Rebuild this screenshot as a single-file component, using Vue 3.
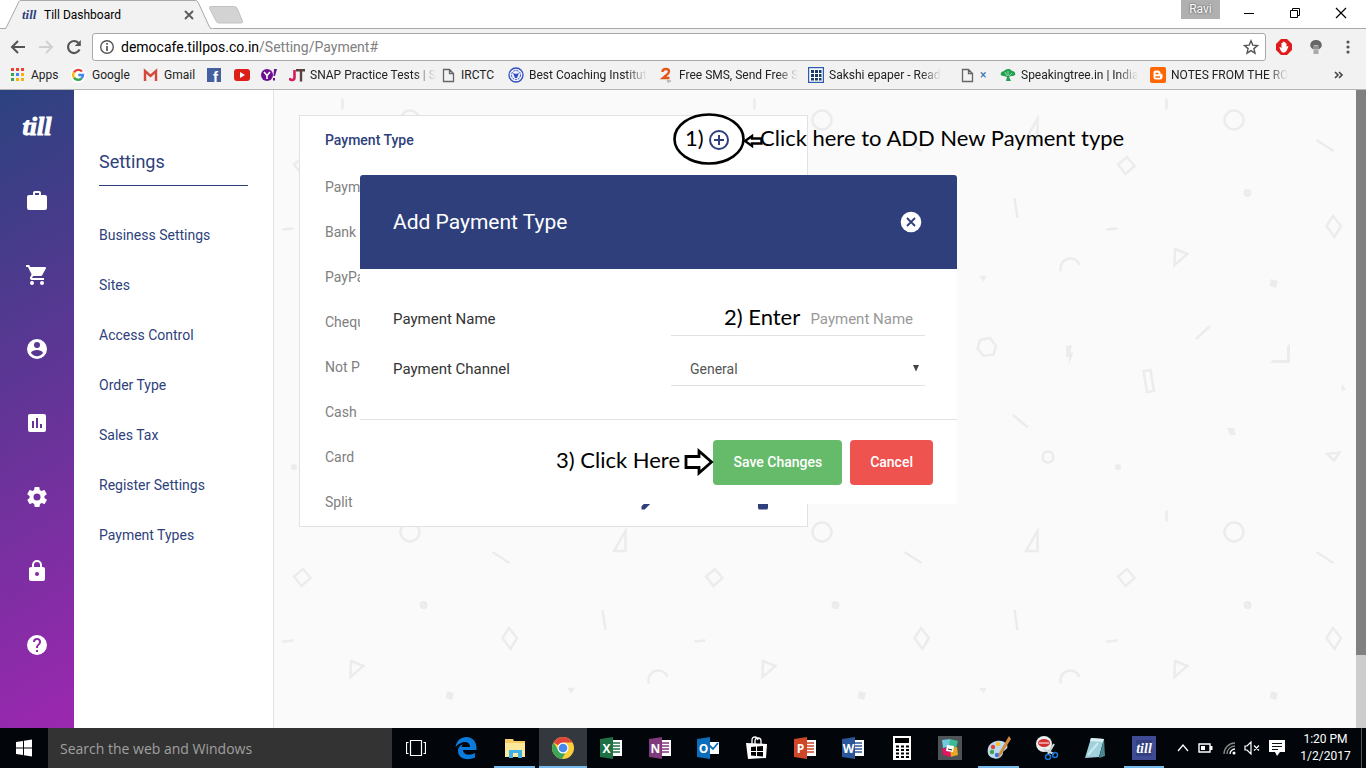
<template>
  <div class="screen">
    <header class="browser">
      <div class="tab-strip">
        <div class="tab">
          <svg class="tab-shape" viewBox="0 0 208 29">
            <path d="M0 28.5H1L14 1.5Q14.5 .5 16 .5H190Q192 .5 193 2L205 28.500H208V29H0z" fill="#f2f2f2" />
            <path d="M0 28.500Q1 28.500 2 26L14 1.500Q14.500 .5 16 .5H190Q192 .5 193 2L204 26Q205 28.500 207 28.500" fill="none" stroke="#a9a9a9" />
          </svg>
          <span class="tab-logo">till</span>
          <span class="tab-title">Till Dashboard</span>
          <button class="plain tab-close" aria-label="Close tab">
            <svg width="10" height="10" viewBox="0 0 10 10"><path d="M1 1l8 8M9 1L1 9" stroke="#5a5a5a" stroke-width="1.800" /></svg>
          </button>
        </div>
        <button class="plain new-tab" aria-label="New tab">
          <svg width="36" height="18" viewBox="0 0 36 18">
            <path d="M3 .5H26Q28 .5 29 2L34.500 15Q35 17 33 17H11Q9 17 8 15L1.500 2Q1 .5 3 .5z" fill="#d3d3d3" stroke="#c2c2c2" />
          </svg>
        </button>
        <span class="profile">Ravi</span>
        <div class="window-buttons">
          <button class="plain" aria-label="Minimize"><svg width="12" height="12" viewBox="0 0 12 12"><path d="M1 6.500h10" stroke="#000" /></svg></button>
          <button class="plain" aria-label="Restore"><svg width="12" height="12" viewBox="0 0 12 12"><path d="M1.500 3.500h7v7h-7zM3.500 3.500v-2h7v7h-2" fill="none" stroke="#000" /></svg></button>
          <button class="plain" aria-label="Close"><svg width="12" height="12" viewBox="0 0 12 12"><path d="M1 1l10 10M11 1L1 11" stroke="#000" stroke-width="1.2" /></svg></button>
        </div>
      </div>

      <div class="toolbar">
        <button class="plain nav-button" aria-label="Back">
          <svg width="16" height="16" viewBox="0 0 16 16"><path d="M15 8H2.500M8 2L2 8l6 6" fill="none" stroke="#555" stroke-width="2" /></svg>
        </button>
        <button class="plain nav-button" aria-label="Forward">
          <svg width="16" height="16" viewBox="0 0 16 16"><path d="M1 8h12.500M8 2l6 6-6 6" fill="none" stroke="#d0d0d0" stroke-width="2" /></svg>
        </button>
        <button class="plain nav-button" aria-label="Reload">
          <svg width="16" height="16" viewBox="0 0 16 16"><path d="M13.500 10.500A6 6 0 1 1 12.500 4" fill="none" stroke="#555" stroke-width="2.200" /><path d="M14.800 1v6H8.800z" fill="#555" /></svg>
        </button>
        <div class="address">
          <svg width="16" height="16" viewBox="0 0 16 16"><circle cx="8" cy="8" r="6.300" fill="none" stroke="#555" stroke-width="1.400" /><path d="M8 7v5M8 4v1.800" stroke="#555" stroke-width="1.700" /></svg>
          <span class="url">democafe.tillpos.co.in<span class="path">/Setting/Payment#</span></span>
          <button class="plain" aria-label="Bookmark this page">
            <svg width="16" height="16" viewBox="0 0 16 16"><path d="M8 1.800l1.800 4.300 4.700.4-3.600 3.100 1.100 4.600L8 11.700l-4 2.500 1.100-4.600-3.600-3.100 4.700-.4z" fill="none" stroke="#555" stroke-width="1.400" /></svg>
          </button>
        </div>
        <div class="extensions">
          <svg width="16" height="16" viewBox="0 0 16 16"><path d="M5 0h6l5 5v6l-5 5H5l-5-5V5z" fill="#e01b1b" /><path d="M5 12L3.300 8.500l1-.6 1.200 1.300V4h1.200v3.500V2.800H8v4.500V3h1.300v4.500V4.300h1.200V8l1.100-1 .9.500L10.500 12l-2 1.500h-2z" fill="#fff" /></svg>
          <svg width="16" height="16" viewBox="0 0 16 16"><path d="M8 1a5.500 5 0 0 0-3 9.300h6A5.500 5 0 0 0 8 1z" fill="#666" /><path d="M6 10V6.500h4V10M8 6.500V10" fill="none" stroke="#bbb" /><path d="M5.500 10.500h5V15h-5z" fill="#aaa" /></svg>
          <svg width="16" height="16" viewBox="0 0 16 16" fill="#555"><circle cx="8" cy="3" r="1.600" /><circle cx="8" cy="8" r="1.600" /><circle cx="8" cy="13" r="1.600" /></svg>
        </div>
      </div>

      <nav class="bookmarks">
        <a v-for="(item, i) in bookmarks" :key="i" href="#" class="bookmark" :style="{ width: item.width + 'px' }">
          <svg width="16" height="16" viewBox="0 0 16 16" v-html="item.icon"></svg>
          <span v-if="item.label" :class="{ faded: item.faded, tiny: item.label === '×' }">{{ item.label }}</span>
        </a>
        <button class="plain more" aria-label="More bookmarks">
          <svg width="10" height="8" viewBox="0 0 10 8"><path d="M1 1l3 3-3 3M5 1l3 3-3 3" fill="none" stroke="#444" stroke-width="1.600" /></svg>
        </button>
      </nav>
    </header>

    <div class="page">
      <aside class="rail">
        <a href="#" class="logo">till</a>
        <a v-for="item in rail" :key="item.name" href="#" class="rail-link" :aria-label="item.name">
          <svg width="24" height="24" viewBox="0 0 24 24"><path :d="item.path" fill="#fff" fill-rule="evenodd" /></svg>
        </a>
      </aside>

      <nav class="settings">
        <h2>Settings</h2>
        <a v-for="link in links" :key="link" href="#">{{ link }}</a>
      </nav>

      <main class="content">
        <svg class="pattern">
          <defs>
            <pattern id="shapes" x="-142" y="0" width="412" height="412" patternUnits="userSpaceOnUse">
              <g fill="none" stroke="#ececec" stroke-width="2.500">
                <path d="M210.500 8.500v11M360.500 50l17 11M58.500 108l3 20M150.500 139.500l11-1M240 249l14-13M57 325l15 12.500" />
                <circle cx="278" cy="30" r="9.500" />
                <circle cx="92" cy="367" r="5.500" />
                <path d="M81.500 29v20H70zM171 67l7.500 9-9 8-7.500-9.500zM377 126l8 10-6.500 11-8-11zM219 159l12.500 5-13 11z" />
                <path d="M24 250l10-2 6 8-2.500 8.500-10 1.500-6-7.500zM187.500 281l7-1 3.500 21-7 1zM371 364l12.500-1.500-5.500 8z" />
                <path d="M105 181.500A9.500 9.500 0 0 1 123.500 175" />
              </g>
              <g fill="#ececec">
                <circle cx="291.500" cy="103" r="4" />
                <circle cx="162" cy="377" r="3" />
                <path d="M23 186l8-.5-3.500 6zM315 189l7 2-2 7-6.500-2zM110 256l6-1-1.500 7.500h3L112.500 276l.5-9h-3zM314 273l3-3h14v-13l3-4v20zM386 294l4 5.500-4.500 1.500zM271 338h7l2 7h-6z" />
              </g>
            </pattern>
          </defs>
          <rect width="100%" height="100%" fill="url(#shapes)" />
        </svg>

        <section class="card">
          <div class="card-head">
            <h3>Payment Type</h3>
            <button class="plain add" aria-label="Add payment type">
              <svg width="20" height="20" viewBox="0 0 20 20"><circle cx="10" cy="10" r="9" fill="none" stroke="#2e3f7c" stroke-width="2" /><path d="M10 5v10M5 10h10" stroke="#2e3f7c" stroke-width="2" /></svg>
            </button>
          </div>
          <table>
            <tbody>
              <tr v-for="type in types" :key="type">
                <td>{{ type }}</td>
                <td class="edit">
                  <svg width="20" height="20" viewBox="0 0 24 24"><path d="M20.700 7c.4-.4.4-1 0-1.400l-2.300-2.300c-.4-.4-1-.4-1.400 0l-1.800 1.800 3.700 3.700M3 17.200V21h3.800L17.800 9.900l-3.700-3.700z" fill="#2e3f7c" /></svg>
                </td>
                <td class="remove">
                  <svg width="20" height="20" viewBox="0 0 24 24"><path d="M19 4h-3.500l-1-1h-5l-1 1H5v2h14M6 19a2 2 0 0 0 2 2h8a2 2 0 0 0 2-2V7H6z" fill="#2e3f7c" /></svg>
                </td>
              </tr>
            </tbody>
          </table>
        </section>

        <form class="modal" @submit.prevent>
          <div class="modal-head">
            <h2>Add Payment Type</h2>
            <button type="button" class="plain" aria-label="Close dialog">
              <svg width="22" height="22" viewBox="0 0 22 22"><circle cx="11" cy="11" r="10.300" fill="#fff" /><path d="M7 7l8 8M15 7l-8 8" stroke="#2e3f7c" stroke-width="1.800" /></svg>
            </button>
          </div>
          <div class="modal-body">
            <div class="field">
              <label for="payment-name">Payment Name</label>
              <input id="payment-name" v-model="name" type="text" placeholder="Payment Name" />
            </div>
            <div class="field">
              <label for="payment-channel">Payment Channel</label>
              <select id="payment-channel" v-model="channel">
                <option>General</option>
              </select>
              <svg class="caret" width="6" height="7" viewBox="0 0 6 7"><path d="M0 0h6L3 6.500z" fill="#444" /></svg>
            </div>
          </div>
          <div class="modal-foot">
            <button type="submit" class="save">Save Changes</button>
            <button type="button" class="cancel">Cancel</button>
          </div>
        </form>

        <svg class="mark ring" width="92" height="52" viewBox="0 0 92 52">
          <ellipse cx="36" cy="26" rx="34.500" ry="24.500" fill="none" stroke="#000" stroke-width="2.600" />
          <path d="M72 28l7-5v2.500h9.500v5H79V33z" fill="#fff" stroke="#000" stroke-width="2.400" />
        </svg>
        <span class="mark note-one">1)</span>
        <span class="mark note-add">Click here to ADD New Payment type</span>
        <span class="mark note-enter">2) Enter</span>
        <span class="mark note-save">3) Click Here</span>
        <svg class="mark arrow" width="30" height="28" viewBox="0 0 30 28">
          <path d="M2 8.500h13V3l12.500 11L15 25v-5.500H2z" fill="#fff" stroke="#000" stroke-width="2.800" />
        </svg>
      </main>

      <div class="scrollbar"><div class="thumb"></div></div>
    </div>

    <footer class="taskbar">
      <button class="plain start" aria-label="Start">
        <svg width="16" height="18" viewBox="0 0 16 18"><path d="M0 3l7-1v6.500H0zM8 1.800L16 .5v8H8zM0 9.500h7V16l-7-1zM8 9.500h8v8L8 16.200z" fill="#fff" /></svg>
      </button>
      <input class="search" type="text" placeholder="Search the web and Windows" aria-label="Search" />
      <button class="plain task-view" aria-label="Task view">
        <svg width="20" height="18" viewBox="0 0 20 18"><path d="M4.500 1.500h11v15h-11zM2.500 3.500h-2v11h2M17.500 3.500h2v11h-2" fill="none" stroke="#fff" stroke-width="1.200" /></svg>
      </button>
      <div class="apps">
        <button v-for="app in apps" :key="app.name" class="plain app" :class="{ open: app.open, active: app.active }" :aria-label="app.name">
          <svg width="24" height="24" viewBox="0 0 24 24" v-html="app.icon"></svg>
        </button>
      </div>
      <div class="tray">
        <svg width="12" height="12" viewBox="0 0 12 12"><path d="M1 9l5-6 5 6" fill="none" stroke="#fff" stroke-width="1.300" /></svg>
        <svg width="15" height="12" viewBox="0 0 15 12"><path d="M1 2h11v8H1z" fill="none" stroke="#fff" stroke-width="1.400" /><path d="M12 4h2.500v4H12zM3 4h4v4H3z" fill="#fff" /></svg>
        <svg width="14" height="14" viewBox="0 0 14 14"><path d="M2 13A11 11 0 0 1 13 2M5 13a8 8 0 0 1 8-8" fill="none" stroke="#888" stroke-width="1.300" /><path d="M8 13a5 5 0 0 1 5-5" fill="none" stroke="#fff" stroke-width="1.300" /><circle cx="12" cy="12" r="1.500" fill="#fff" /></svg>
        <svg width="16" height="14" viewBox="0 0 16 14"><path d="M1 5h2l4-4v12L3 9H1zM10 4.500l5 5M15 4.500l-5 5" fill="none" stroke="#fff" stroke-width="1.200" /></svg>
        <svg width="17" height="18" viewBox="0 0 17 18"><path d="M0 1h16v12h-5l-3 4-2-4H0z" fill="#fff" /><path d="M3 4.500h10M3 7.500h10M3 10.500h6" stroke="#111" /></svg>
      </div>
      <div class="clock"><span>1:20 PM</span><span>1/2/2017</span></div>
      <div class="show-desktop"></div>
    </footer>
  </div>
</template>

<script setup>
import { ref } from 'vue';

const name = ref('');
const channel = ref('General');

const links = ['Business Settings', 'Sites', 'Access Control', 'Order Type', 'Sales Tax', 'Register Settings', 'Payment Types'];

const types = ['Payment', 'Bank', 'PayPal', 'Cheque', 'Not Paid', 'Cash', 'Card', 'Split'];

const rail = [
  { name: 'Business', path: 'M10 2h4a2 2 0 0 1 2 2v2h4a2 2 0 0 1 2 2v11a2 2 0 0 1-2 2H4a2 2 0 0 1-2-2V8c0-1.100.9-2 2-2h4V4c0-1.100.9-2 2-2m4 4V4h-4v2z' },
  { name: 'Orders', path: 'M17 18a2 2 0 1 1 0 4 2 2 0 0 1 0-4M1 2h3.300l.9 2H20a1 1 0 0 1 .9 1.500l-3.600 6.500c-.3.600-1 1-1.700 1H8.100l-.9 1.600v.2c0 .1.100.2.200.2H19v2H7a2 2 0 0 1-1.800-3l1.400-2.400L3 4H1zM7 18a2 2 0 1 1 0 4 2 2 0 0 1 0-4' },
  { name: 'Customers', path: 'M12 2a10 10 0 1 0 0 20 10 10 0 0 0 0-20m0 3a3 3 0 1 1 0 6 3 3 0 0 1 0-6m0 14.200c-2.500 0-4.700-1.300-6-3.200 0-2 4-3.100 6-3.100s6 1.100 6 3.100c-1.300 1.900-3.500 3.200-6 3.200' },
  { name: 'Reports', path: 'M5 3h14a2 2 0 0 1 2 2v14a2 2 0 0 1-2 2H5a2 2 0 0 1-2-2V5c0-1.100.9-2 2-2m2 7v7h2v-7zm4-3v10h2V7zm4 6v4h2v-4z' },
  { name: 'Settings', path: 'M12 15.500a3.500 3.500 0 1 1 0-7 3.500 3.500 0 0 1 0 7m7.400-2.500a8 8 0 0 0 0-2l2.100-1.600c.2-.2.300-.4.100-.7l-2-3.400c-.1-.2-.4-.3-.6-.2l-2.500 1a7 7 0 0 0-1.700-1l-.4-2.600A.5.5 0 0 0 14 2h-4a.5.5 0 0 0-.5.400l-.4 2.700a7 7 0 0 0-1.700 1L5 5.100c-.2-.1-.5 0-.6.200l-2 3.400c-.1.300-.1.500.1.700L4.600 11a8 8 0 0 0 0 2l-2.100 1.700c-.2.100-.3.400-.1.600l2 3.500c.1.200.4.300.6.200l2.500-1c.5.400 1.100.7 1.700 1l.4 2.600c0 .2.200.4.500.4h4c.2 0 .5-.2.500-.4l.4-2.700a7 7 0 0 0 1.700-1l2.500 1c.2.100.5 0 .6-.2l2-3.400c.1-.2.100-.5-.1-.7z' },
  { name: 'Security', path: 'M12 17a2 2 0 1 0 0-4 2 2 0 0 0 0 4m6-9a2 2 0 0 1 2 2v10a2 2 0 0 1-2 2H6a2 2 0 0 1-2-2V10c0-1.100.9-2 2-2h1V6a5 5 0 0 1 10 0v2zm-6-5a3 3 0 0 0-3 3v2h6V6a3 3 0 0 0-3-3' },
  { name: 'Help', path: 'M12 2a10 10 0 1 0 0 20 10 10 0 0 0 0-20m-1 17v-2h2v2zm4.100-7.700-.9.900c-.8.700-1.200 1.300-1.200 2.800h-2v-.5c0-1.100.5-2.100 1.200-2.800l1.200-1.300A2 2 0 1 0 10 9H8a4 4 0 1 1 8 0c0 .9-.4 1.700-.9 2.300' }
];

const pageIcon = '<path d="M3.500 2.500h6l4 4v8h-10zM9.500 2.500v4h4" fill="none" stroke="#666" stroke-width="1.300"/>';

const bookmarks = [
  { label: 'Apps', width: 61, icon: '<g fill="#e94235"><path d="M1 1h3v3H1zM6 1h3v3H6zM11 1h3v3h-3z"/></g><path d="M1 6h3v3H1zM1 11h3v3H1z" fill="#34a853"/><path d="M6 6h3v3H6z" fill="#4285f4"/><path d="M6 11h3v3H6zM11 6h3v3h-3zM11 11h3v3h-3z" fill="#fbaf08"/>' },
  { label: 'Google', width: 72, icon: '<circle cx="7" cy="8" r="8" fill="#fff"/><g fill="none" stroke-width="2.400"><path d="M11 4.500A5 5 0 0 0 3 5.300" stroke="#ea4335"/><path d="M3 5.300a5 5 0 0 0 0 5.400" stroke="#fbbc05"/><path d="M3 10.700a5 5 0 0 0 7.500.8" stroke="#34a853"/><path d="M10.500 11.500A5 5 0 0 0 12 8H7.300" stroke="#4285f4"/></g>' },
  { label: 'Gmail', width: 64, icon: '<path d="M1 3h13v11H1z" fill="#eee"/><path d="M2 14V4l5.500 5L13 4v10" fill="none" stroke="#d5493c" stroke-width="2.400"/>' },
  { label: '', width: 27, icon: '<path d="M0 1h14v14H0z" fill="#4460a0"/><text x="6" y="15" font-family="Liberation Sans" font-weight="bold" font-size="15" fill="#fff">f</text>' },
  { label: '', width: 27, icon: '<rect y="2" width="16" height="12" rx="3" fill="#dd1f1a"/><path d="M6 5l5 3-5 3z" fill="#fff"/>' },
  { label: '', width: 28, icon: '<circle cx="6" cy="8" r="6" fill="#6b0f8f"/><path d="M3 5l3 3.500L9 5M6 8.500V12" fill="none" stroke="#fff" stroke-width="1.600"/><path d="M13 2h3l-2 7h-1.500zM12 11h2v2.500h-2z" fill="#6b0f8f"/>' },
  { label: 'SNAP Practice Tests | S', width: 151, faded: true, icon: '<path d="M5.500 3v7.500q0 2.500-2.500 2.500-2 0-2.500-2" fill="none" stroke="#d8195b" stroke-width="2.600"/><path d="M7 3.300h9M12 3v11.500" stroke="#5b4040" stroke-width="2.400"/>' },
  { label: 'IRCTC', width: 68, icon: pageIcon },
  { label: 'Best Coaching Institut', width: 150, faded: true, icon: '<circle cx="8" cy="8" r="7" fill="#eef" stroke="#3050c0" stroke-width="1.300"/><circle cx="8" cy="8" r="4.500" fill="none" stroke="#3050c0" stroke-dasharray="2 1"/><path d="M5 6l3 1 3-1-2 5H7z" fill="#3050c0"/>' },
  { label: 'Free SMS, Send Free S', width: 150, faded: true, icon: '<path d="M4.500 5q0-3 3.500-3 3 0 3 2.500 0 2-3 4L5 11h6.500" fill="none" stroke="#e2581c" stroke-width="2.400"/><path d="M9 13l4 1-3 1.500z" fill="#bbb" stroke="#bbb"/>' },
  { label: 'Sakshi epaper - Read', width: 151, faded: true, icon: '<path d="M.5.5h15v15H.5z" fill="#fff" stroke="#2c5cad" stroke-width="1.500"/><path d="M3 3h3v3H3zM7 3h3v3H7zM11 3h2.500v3H11zM3 7h3v3H3zM7 7h3v3H7zM11 7h2.500v3H11zM3 11h3v2.500H3zM7 11h3v2.500H7zM11 11h2.500v2.500H11z" fill="#173a6b"/>' },
  { label: '×', width: 41, icon: pageIcon },
  { label: 'Speakingtree.in | India', width: 150, faded: true, icon: '<path d="M8 2c3 0 3 1 4 2 2 0 4 2 3 4-1 1-3 1-4 1l-2 1 2 4H6l1-4-3-1C1 9 0 8 1 6c0-1 2-2 3-2 1-1 2-2 4-2z" fill="#20a050"/><path d="M5 5l2 4M8 4v5M12 6L9 9" stroke="#9ed8ae"/>' },
  { label: 'NOTES FROM THE RO', width: 150, faded: true, icon: '<rect width="16" height="16" rx="2" fill="#f60"/><path d="M5.500 3.500H8A2.500 2.500 0 0 1 10.500 6.500l2 1v2.500a2.500 2.500 0 0 1-2.500 2.500H6A2.500 2.500 0 0 1 3.500 10V5.500a2 2 0 0 1 2-2z" fill="#fff"/><path d="M5.500 6.500h3M5.500 10H10" stroke="#f60" stroke-width="1.300"/>' }
];

// office-style tile: coloured cover with a letter and a sheet behind it
const office = (letter, color) =>
  `<path d="M12 4h11v16H12z" fill="#fff"/><path d="M14 7h7M14 10h7M14 13h7M14 16h7" stroke="${color}" stroke-width="1.500"/><path d="M1 3l13-2v22L1 21z" fill="${color}"/><text x="7.500" y="16.500" text-anchor="middle" font-family="Open Sans" font-weight="bold" font-size="12" fill="#fff">${letter}</text>`;

const apps = [
  { name: 'Edge', icon: '<path d="M1.500 11C2.500 4.500 7 1 12.500 1 19 1 22.500 6 22.500 12v2H9c0 5 7 6 12 3v4.500C12 25.500 4 22 4 15c0-4 3-6 5-7-1 1-1 2-1.500 3H16c0-6-8-7-14.500 0z" fill="#0a7bdc"/>' },
  { name: 'Explorer', open: true, icon: '<path d="M2 3h8l1 2h11v16H2z" fill="#f4ce62"/><path d="M2 7h20v14H2z" fill="#fde79b"/><path d="M6 22v-8h13v8h-4v-5h-5v5z" fill="#3db1e8"/>' },
  { name: 'Chrome', active: true, icon: '<circle cx="12" cy="12" r="11" fill="#fbce3c"/><path d="M12 12L2.500 6.500A11 11 0 0 1 21.500 6.500H12z" fill="#e0443a"/><path d="M2.500 6.500A11 11 0 0 0 11 23l5-9-8.500.5z" fill="#3da556"/><circle cx="12" cy="12" r="5.500" fill="#fff"/><circle cx="12" cy="12" r="4.300" fill="#4788ee"/>' },
  { name: 'Excel', icon: office('X', '#1f7145') },
  { name: 'OneNote', icon: office('N', '#80397b') },
  { name: 'Outlook', icon: '<path d="M11 6h12v12H11z" fill="#fff"/><path d="M13 9l4 4 5-6" fill="none" stroke="#0a6ebd" stroke-width="1.800"/><path d="M1 3l13-2v22L1 21z" fill="#0a6ebd"/><text x="7.500" y="16.500" text-anchor="middle" font-family="Open Sans" font-weight="bold" font-size="12" fill="#fff">O</text>' },
  { name: 'Store', icon: '<path d="M7 8V4q0-3 3-3 2 0 3 3M10 8V5q0-3 3-3t3 3v3" fill="none" stroke="#fff" stroke-width="1.300"/><path d="M1 7l21 1-1 14-18 1z" fill="#fff"/><path d="M6 11l5-.5V15H6zM12 10.500l6-.5v5h-6zM6 16h5v4l-5-.5zM12 16h6v4.500l-6-.5z" fill="#000"/>' },
  { name: 'PowerPoint', icon: office('P', '#d04727') },
  { name: 'Word', icon: office('W', '#2b579a') },
  { name: 'Calculator', icon: '<path d="M3 0h18v24H3z" fill="#fff"/><path d="M5 2h14v5H5z" fill="#000"/><path d="M6 10.500h3M11 10.500h3M16 10.500h3M6 14h3M11 14h3M16 14h3M6 17.500h3M11 17.500h3M16 17.500h3M6 21h3M11 21h3M16 21h3" stroke="#000" stroke-width="2"/>' },
  { name: 'Slack', icon: '<path d="M0 0h24v24H0z" fill="#4d5357"/><path d="M4 4l8-1 1 7-8 2z" fill="#6ecadc"/><path d="M12 3l8 2-2 7-7-2z" fill="#3eb991"/><path d="M12 12l7-1 1 8-8 2z" fill="#e9a820"/><path d="M4 12l8 1 1 8-8-2z" fill="#e01563"/><path d="M9 9l7 1-1 6-7-1z" fill="#fff"/><path d="M10 13l4 1" stroke="#222"/>' },
  { name: 'Paint', open: true, icon: '<path d="M1 12C3 4 17 2 20 9c2 4-3 5-4 7 0 5-5 8-10 6-5-1-6-6-5-10z" fill="#bcd9ee"/><circle cx="6" cy="11" r="2.200" fill="#db4437"/><circle cx="11" cy="8" r="2.200" fill="#fbc02d"/><circle cx="5" cy="16" r="2.200" fill="#43a047"/><circle cx="10" cy="19" r="2.200" fill="#3f6fd8"/><path d="M22 0l2 3-10 16-3 3 1-5z" fill="#d28a3c"/>' },
  { name: 'Snipping Tool', icon: '<circle cx="9" cy="8" r="8" fill="#eceff1"/><ellipse cx="9" cy="7" rx="6" ry="4" fill="#d32f2f"/><path d="M4 7h10" stroke="#fff"/><path d="M8 13l11 5M19 8l-6 10" stroke="#cfd8dc" stroke-width="2"/><circle cx="20" cy="19" r="2.500" fill="none" stroke="#1976d2" stroke-width="1.500"/><circle cx="13" cy="21" r="2.500" fill="none" stroke="#1976d2" stroke-width="1.500"/>' },
  { name: 'Notepad', icon: '<path d="M8 2l13 1-5 18-14 1z" fill="#9fd0dc"/><path d="M21 3l1 17-6 2z" fill="#4d8794"/><path d="M8 2l13 1-1 3-13-1z" fill="#dbeff4"/><path d="M5 19l10-12" stroke="#c9e9ef" stroke-width="2"/>' },
  { name: 'Till', open: true, icon: '<path d="M0 0h24v24H0z" fill="#404b96"/><path d="M4 4h16v16H4z" fill="#33407f"/><text x="12" y="16.500" text-anchor="middle" font-family="Liberation Serif" font-weight="bold" font-style="italic" font-size="14" fill="#fff">till</text>' }
];
</script>

<style>
body {
  margin: 0;
}
</style>

<style scoped>
.screen {
  display: flex;
  flex-direction: column;
  height: 100vh;
  overflow: hidden;
  font-family: Roboto, sans-serif;
  background: #fff;
}

.screen * {
  box-sizing: border-box;
}

.plain {
  display: flex;
  align-items: center;
  justify-content: center;
  padding: 0;
  border: none;
  background: none;
}

a {
  text-decoration: none;
}

svg {
  flex: none;
}

h2,
h3 {
  margin: 0;
  font-weight: 400;
}

/* browser window */
.browser {
  font-size: 12px;
  background: #f2f2f2;
  border-bottom: 1px solid #b6b6b6;
}

.tab-strip {
  display: flex;
  height: 29px;
  background: #fff;
  box-shadow: inset 0 -1px #a9a9a9;
}

.tab {
  position: relative;
  display: flex;
  align-items: center;
  width: 208px;
  margin-left: 5px;
  padding: 0 19px 0 17px;
}

.tab-shape {
  position: absolute;
  inset: 0;
}

.tab-logo,
.tab-title,
.tab-close {
  position: relative;
}

.tab-logo {
  width: 22px;
  font: italic bold 13px "Liberation Serif", serif;
  color: #2e3f7c;
}

.tab-title {
  flex: 1;
}

.new-tab {
  align-self: center;
  margin-left: -5px;
}

.profile {
  align-self: flex-start;
  width: 39px;
  height: 19px;
  margin-left: auto;
  font-size: 12px;
  line-height: 18px;
  text-align: center;
  color: #fff;
  text-shadow: 0 0 2px #333;
  background: #b0b0b0;
}

.window-buttons {
  display: flex;
  height: 26px;
  margin: 0 2px 0 6px;
}

.window-buttons button {
  width: 46px;
}

.toolbar {
  display: flex;
  align-items: center;
  height: 36px;
  padding-left: 4px;
}

.nav-button {
  width: 28px;
}

.address {
  display: flex;
  flex: 1;
  align-items: center;
  gap: 6px;
  height: 28px;
  margin-left: 4px;
  padding: 0 6px;
  font-size: 14px;
  background: #fff;
  border: 1px solid #a9a9a9;
  border-radius: 3px;
}

.url {
  flex: 1;
}

.path {
  color: #808080;
}

.extensions {
  display: flex;
  gap: 16px;
  padding: 0 10px;
}

.bookmarks {
  display: flex;
  align-items: center;
  height: 24px;
  padding: 0 22px 4px 10px;
}

.bookmark {
  display: flex;
  flex: none;
  align-items: center;
  gap: 5px;
  padding-right: 8px;
  white-space: nowrap;
  color: #222;
}

.bookmark:nth-child(4),
.bookmark:nth-child(5),
.bookmark:nth-child(6) {
  padding-right: 0;
}

.faded {
  mask-image: linear-gradient(to right, #000 82%, transparent);
}

.tiny {
  color: #2f6fb5;
}

.more {
  margin-left: auto;
}

/* app */
.page {
  display: flex;
  flex: 1;
  min-height: 0;
}

.rail {
  display: flex;
  flex-direction: column;
  width: 74px;
  background: linear-gradient(150deg, #2c427f, #9c27b0);
}

.rail a {
  display: flex;
  align-items: center;
  justify-content: center;
  height: 74px;
}

.rail .logo {
  font: italic bold 26px "Liberation Serif", serif;
  color: #fff;
  -webkit-text-stroke: 1px #fff;
}

.settings {
  width: 200px;
  padding: 51px 25px 0;
  background: #fff;
  border-right: 1px solid #e2e2e2;
}

.settings h2 {
  height: 45px;
  margin-bottom: 24px;
  font-size: 18px;
  line-height: 42px;
  color: #2e3f7c;
  border-bottom: 1px solid #2e3f7c;
}

.settings a {
  display: block;
  font-size: 14px;
  line-height: 50px;
  color: #2e3f7c;
}

.content {
  position: relative;
  flex: 1;
  padding: 25px;
  background: #fafafa;
}

.pattern {
  position: absolute;
  top: 0;
  left: 0;
  width: 100%;
  height: 100%;
}

.card {
  position: relative;
  max-width: 509px;
  padding-bottom: 2px;
  background: #fff;
  border: 1px solid #e2e2e2;
}

.card-head {
  display: flex;
  align-items: center;
  justify-content: space-between;
  height: 48px;
  padding: 0 78px 0 25px;
}

.card-head h3 {
  font-size: 14px;
  font-weight: 500;
  color: #2e3f7c;
}

table {
  width: 100%;
  border-collapse: collapse;
  font-size: 14px;
  color: #808080;
}

td {
  height: 45px;
  padding: 0;
}

td:first-child {
  padding-left: 25px;
}

td svg {
  display: block;
}

.edit {
  width: 114px;
}

.remove {
  width: 54px;
}

.modal {
  position: absolute;
  top: 85px;
  left: 86px;
  width: 597px;
  background: #fff;
  border-radius: 3px;
  overflow: hidden;
}

.modal-head {
  display: flex;
  align-items: center;
  justify-content: space-between;
  height: 94px;
  padding: 0 35px 0 33px;
  background: #2e3f7c;
}

.modal-head h2 {
  font-size: 21px;
  color: #fff;
}

.modal-body {
  padding: 17px 32px 33px 33px;
  border-bottom: 1px solid #e2e2e2;
}

.field {
  position: relative;
  display: flex;
  align-items: flex-end;
  justify-content: space-between;
  height: 50px;
}

.field label {
  font-size: 15px;
  line-height: 34px;
  color: #333;
}

.field input,
.field select {
  width: 254px;
  height: 34px;
  border: none;
  border-bottom: 1px solid #e2e2e2;
  border-radius: 0;
  outline: none;
  background: none;
  font-family: inherit;
  font-size: 15px;
}

.field input {
  padding: 0 12px;
  text-align: right;
}

.field input::placeholder {
  color: #999;
}

.field select {
  padding: 0 19px;
  font-size: 14px;
  color: #555;
  appearance: none;
}

.caret {
  position: absolute;
  right: 6px;
  bottom: 14px;
}

.modal-foot {
  display: flex;
  justify-content: flex-end;
  gap: 8px;
  padding: 20px 24px 19px;
}

.modal-foot button {
  height: 45px;
  padding: 0 20px 1px;
  border: none;
  border-radius: 4px;
  font-family: inherit;
  font-size: 14px;
  font-weight: 500;
  color: #fff;
}

.save {
  background: #66bb6a;
}

.cancel {
  background: #ef5350;
}

/* tutorial notes drawn over the app */
.mark {
  position: absolute;
  font: 22px/28px Lato, sans-serif;
  white-space: nowrap;
  color: #000;
}

.ring {
  top: 23px;
  left: 399px;
}

.note-one {
  top: 34px;
  left: 411px;
}

.note-add {
  top: 34px;
  left: 486px;
}

.note-enter {
  top: 213px;
  left: 450px;
}

.note-save {
  top: 356px;
  left: 282px;
}

.arrow {
  top: 358px;
  left: 410px;
}

.scrollbar {
  width: 10px;
  background: #cdcdcd;
}

.thumb {
  height: 565px;
  background: #808080;
}

/* taskbar */
.taskbar {
  display: flex;
  height: 40px;
  color: #fff;
  background: #02050a;
}

.start,
.task-view {
  width: 48px;
}

.search {
  width: 344px;
  padding: 0 12px;
  border: none;
  border-radius: 0;
  font-family: "Open Sans", sans-serif;
  font-size: 14px;
  color: #fff;
  background: #333;
}

.search::placeholder {
  color: #a0a0a0;
}

.apps {
  display: flex;
  flex: 1;
  padding-left: 2px;
}

.app {
  position: relative;
  flex: 1;
}

.app.active {
  background: #33383e;
}

.app.open::after,
.app.active::after {
  position: absolute;
  right: 4px;
  bottom: 0;
  left: 4px;
  height: 2px;
  background: #76b9ed;
  content: "";
}

.app.active::after {
  right: 0;
  left: 0;
}

.tray {
  display: flex;
  align-items: center;
  justify-content: space-between;
  width: 118px;
  padding-left: 9px;
}

.clock {
  display: flex;
  flex-direction: column;
  justify-content: center;
  width: 75px;
  padding-left: 4px;
  font-size: 12px;
  line-height: 17px;
  text-align: center;
}

.show-desktop {
  width: 5px;
  border-left: 1px solid #555;
}
</style>
